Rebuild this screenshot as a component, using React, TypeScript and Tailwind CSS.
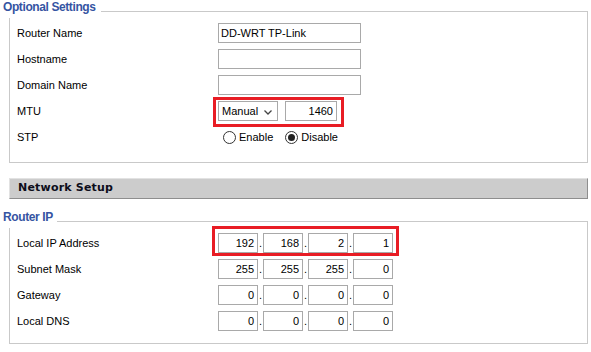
import React from "react";

const RED = "border-[#e81c24]";

function Legend({ children, pr }: { children: React.ReactNode; pr: string }) {
  return (
    <div
      className={`absolute left-[-6px] top-0 h-[18px] bg-white ${pr} font-bold text-[12px] leading-[14px] tracking-[-0.4px] text-[#3554a2]`}
    >
      {children}
    </div>
  );
}

function TextBox({ value, w = "w-[143px]", right = false }: { value?: string; w?: string; right?: boolean }) {
  return (
    <div
      className={`${w} h-[20px] border border-[#a9a9a9] bg-white leading-[18px] ${right ? "text-right pr-[3px]" : "pl-[2px]"} text-black whitespace-nowrap overflow-hidden`}
    >
      {value}
    </div>
  );
}

function Row({ label, children }: { label: string; children: React.ReactNode }) {
  return (
    <div className="flex items-center h-[20px]">
      <div className="w-[201px] text-black">{label}</div>
      {children}
    </div>
  );
}

function Radio({ checked }: { checked?: boolean }) {
  return (
    <div className="w-[13px] h-[13px] rounded-full border border-[#333] bg-white flex items-center justify-center">
      {checked && <div className="w-[7px] h-[7px] rounded-full bg-[#222]" />}
    </div>
  );
}

function Ip({ octets, highlight }: { octets: string[]; highlight?: boolean }) {
  return (
    <div className="relative flex">
      {octets.map((o, i) => (
        <React.Fragment key={i}>
          <div className="w-[40px] h-[20px] border border-[#a9a9a9] bg-white text-right pr-[3px] leading-[18px]">{o}</div>
          {i < 3 && <div className="w-[5px] h-[20px] leading-[20px] pl-[1px]">.</div>}
        </React.Fragment>
      ))}
      {highlight && (
        <div className={`absolute left-[-6px] top-[-7px] w-[187px] h-[30px] border-[3px] ${RED}`} />
      )}
    </div>
  );
}

export default function App() {
  return (
    <div className="w-[591px] h-[352px] bg-white overflow-hidden font-['Liberation_Sans',Arial,sans-serif] text-[11px] text-black flex flex-col">
      {/* Optional Settings */}
      <div className="relative ml-[9px] w-[579px] pt-[11px]">
        <Legend pr="pr-[5px]">Optional Settings</Legend>
        <div className="border border-[#c9c9c9] pl-[7px] pt-[11px] pb-[15px] flex flex-col gap-[6px]">
          <Row label="Router Name">
            <TextBox value="DD-WRT TP-Link" />
          </Row>
          <Row label="Hostname">
            <TextBox />
          </Row>
          <Row label="Domain Name">
            <TextBox />
          </Row>
          <Row label="MTU">
            <div className="relative flex gap-[7px]">
              <div className="w-[60px] h-[20px] border border-[#a9a9a9] bg-white flex items-center justify-between pl-[3px] pr-[5px]">
                <span className="leading-[18px]">Manual</span>
                <svg width="8" height="5" viewBox="0 0 8 5" className="mt-[2px]">
                  <path d="M0.5 0.5 L4 4 L7.5 0.5" fill="none" stroke="#444" strokeWidth="1.3" />
                </svg>
              </div>
              <TextBox value="1460" w="w-[52px]" right />
              <div className={`absolute left-[-5px] top-[-4px] w-[131px] h-[30px] border-[3px] ${RED}`} />
            </div>
          </Row>
          <Row label="STP">
            <div className="flex items-center pl-[5px]">
              <Radio />
              <span className="ml-[3px]">Enable</span>
              <div className="ml-[12px]">
                <Radio checked />
              </div>
              <span className="ml-[3px]">Disable</span>
            </div>
          </Row>
        </div>
      </div>

      {/* Network Setup header */}
      <div className="ml-[9px] mt-[15px] w-[579px] h-[21px] shrink-0 bg-[#cccccc] border-t border-l border-t-[#e2e2e2] border-l-[#e2e2e2] border-r border-b border-r-[#8e8e8e] border-b-[#8e8e8e] pl-[8px] flex items-center">
        <span className="font-['DejaVu_Sans',Verdana,sans-serif] font-bold text-[11px] tracking-[0.2px] text-[#0d0d1a]">Network Setup</span>
      </div>

      {/* Router IP */}
      <div className="relative ml-[9px] mt-[11px] w-[579px] pt-[11px]">
        <Legend pr="pr-[4px]">Router IP</Legend>
        <div className="border border-[#c9c9c9] pl-[7px] pt-[11px] pb-[12px] flex flex-col gap-[6px]">
          <Row label="Local IP Address">
            <Ip octets={["192", "168", "2", "1"]} highlight />
          </Row>
          <Row label="Subnet Mask">
            <Ip octets={["255", "255", "255", "0"]} />
          </Row>
          <Row label="Gateway">
            <Ip octets={["0", "0", "0", "0"]} />
          </Row>
          <Row label="Local DNS">
            <Ip octets={["0", "0", "0", "0"]} />
          </Row>
        </div>
      </div>
    </div>
  );
}
